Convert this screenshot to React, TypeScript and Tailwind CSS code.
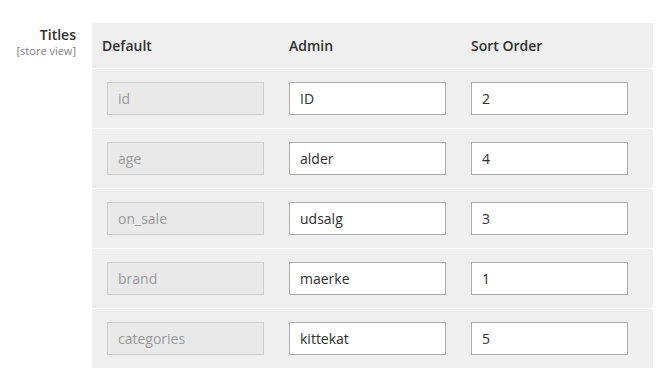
const rows = [
  { def: "id", admin: "ID", sort: "2" },
  { def: "age", admin: "alder", sort: "4" },
  { def: "on_sale", admin: "udsalg", sort: "3" },
  { def: "brand", admin: "maerke", sort: "1" },
  { def: "categories", admin: "kittekat", sort: "5" },
];

const font = { fontFamily: '"Open Sans", "Noto Sans", sans-serif' };

export default function App() {
  return (
    <div className="flex bg-white h-[379px] w-[658px] pt-[23px] text-[#303030]" style={font}>
      <div className="w-[92px] pr-[16px] pt-[3px] text-right">
        <div className="text-[14px] leading-[18px] font-semibold text-[#303030]">Titles</div>
        <div className="text-[11px] leading-[13px] text-[#808080]">[store view]</div>
      </div>
      <div className="w-[561px] h-[345px] bg-[#efefef]">
        <div className="flex h-[45px] items-center text-[14px] font-semibold">
          <div className="w-[182px] pl-[10px]">Default</div>
          <div className="w-[182px] pl-[15px]">Admin</div>
          <div className="pl-[15px]">Sort Order</div>
        </div>
        {rows.map((r) => (
          <div key={r.def} className="flex h-[60px] items-center border-t border-white">
            <div className="w-[182px] pl-[15px]">
              <div className="w-[157px] h-[33px] flex items-center px-[10px] bg-[#e9e9e9] border border-[#cccccc] text-[14px] text-[#999999]">
                {r.def}
              </div>
            </div>
            <div className="w-[182px] pl-[15px]">
              <div className="w-[157px] h-[33px] flex items-center px-[10px] bg-white border border-[#adadad] text-[14px] text-[#303030]">
                {r.admin}
              </div>
            </div>
            <div className="pl-[15px]">
              <div className="w-[157px] h-[33px] flex items-center px-[10px] bg-white border border-[#adadad] text-[14px] text-[#303030]">
                {r.sort}
              </div>
            </div>
          </div>
        ))}
      </div>
    </div>
  );
}
